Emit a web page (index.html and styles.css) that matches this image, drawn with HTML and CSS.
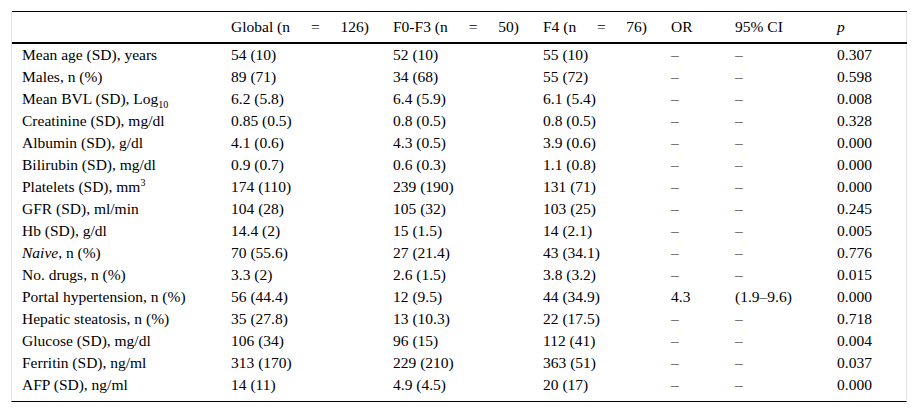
FILE: index.html
```html
<!DOCTYPE html>
<html>

<head>
    <title>Baseline characteristics</title>
    <link rel="stylesheet" href="styles.css">
</head>

<body>
    <div class="box">
        <table class="data">
            <colgroup>
                <col class="c-label">
                <col class="c-global">
                <col class="c-f03">
                <col class="c-f4">
                <col class="c-or">
                <col class="c-ci">
                <col class="c-p">
            </colgroup>
            <thead>
                <tr>
                    <th></th>
                    <th><div class="spread"><span>Global (n</span><span>=</span><span>126)</span></div></th>
                    <th><div class="spread"><span>F0-F3 (n</span><span>=</span><span>50)</span></div></th>
                    <th><div class="spread"><span>F4 (n</span><span>=</span><span>76)</span></div></th>
                    <th>OR</th>
                    <th>95% CI</th>
                    <th><i>p</i></th>
                </tr>
            </thead>
            <tbody>
                <tr><td>Mean age (SD), years</td><td>54 (10)</td><td>52 (10)</td><td>55 (10)</td><td>&ndash;</td><td>&ndash;</td><td>0.307</td></tr>
                <tr><td>Males, n (%)</td><td>89 (71)</td><td>34 (68)</td><td>55 (72)</td><td>&ndash;</td><td>&ndash;</td><td>0.598</td></tr>
                <tr><td>Mean BVL (SD), Log<sub>10</sub></td><td>6.2 (5.8)</td><td>6.4 (5.9)</td><td>6.1 (5.4)</td><td>&ndash;</td><td>&ndash;</td><td>0.008</td></tr>
                <tr><td>Creatinine (SD), mg/dl</td><td>0.85 (0.5)</td><td>0.8 (0.5)</td><td>0.8 (0.5)</td><td>&ndash;</td><td>&ndash;</td><td>0.328</td></tr>
                <tr><td>Albumin (SD), g/dl</td><td>4.1 (0.6)</td><td>4.3 (0.5)</td><td>3.9 (0.6)</td><td>&ndash;</td><td>&ndash;</td><td>0.000</td></tr>
                <tr><td>Bilirubin (SD), mg/dl</td><td>0.9 (0.7)</td><td>0.6 (0.3)</td><td>1.1 (0.8)</td><td>&ndash;</td><td>&ndash;</td><td>0.000</td></tr>
                <tr><td>Platelets (SD), mm<sup>3</sup></td><td>174 (110)</td><td>239 (190)</td><td>131 (71)</td><td>&ndash;</td><td>&ndash;</td><td>0.000</td></tr>
                <tr><td>GFR (SD), ml/min</td><td>104 (28)</td><td>105 (32)</td><td>103 (25)</td><td>&ndash;</td><td>&ndash;</td><td>0.245</td></tr>
                <tr><td>Hb (SD), g/dl</td><td>14.4 (2)</td><td>15 (1.5)</td><td>14 (2.1)</td><td>&ndash;</td><td>&ndash;</td><td>0.005</td></tr>
                <tr><td><i>Naive</i>, n (%)</td><td>70 (55.6)</td><td>27 (21.4)</td><td>43 (34.1)</td><td>&ndash;</td><td>&ndash;</td><td>0.776</td></tr>
                <tr><td>No. drugs, n (%)</td><td>3.3 (2)</td><td>2.6 (1.5)</td><td>3.8 (3.2)</td><td>&ndash;</td><td>&ndash;</td><td>0.015</td></tr>
                <tr><td>Portal hypertension, n (%)</td><td>56 (44.4)</td><td>12 (9.5)</td><td>44 (34.9)</td><td>4.3</td><td>(1.9&ndash;9.6)</td><td>0.000</td></tr>
                <tr><td>Hepatic steatosis, n (%)</td><td>35 (27.8)</td><td>13 (10.3)</td><td>22 (17.5)</td><td>&ndash;</td><td>&ndash;</td><td>0.718</td></tr>
                <tr><td>Glucose (SD), mg/dl</td><td>106 (34)</td><td>96 (15)</td><td>112 (41)</td><td>&ndash;</td><td>&ndash;</td><td>0.004</td></tr>
                <tr><td>Ferritin (SD), ng/ml</td><td>313 (170)</td><td>229 (210)</td><td>363 (51)</td><td>&ndash;</td><td>&ndash;</td><td>0.037</td></tr>
                <tr><td>AFP (SD), ng/ml</td><td>14 (11)</td><td>4.9 (4.5)</td><td>20 (17)</td><td>&ndash;</td><td>&ndash;</td><td>0.000</td></tr>
            </tbody>
        </table>
    </div>
</body>

</html>
```

FILE: styles.css
```css
body {
    margin: 0;
    padding: 11px;
    background: #fff;
    color: #000;
    font-family: "Liberation Serif", "Times New Roman", serif;
    font-size: 15.5px;
}

.box {
    width: 896px;
    box-sizing: border-box;
    border-left: 1px solid #e2e2e2;
    border-right: 1px solid #e2e2e2;
    border-bottom: 1px solid #000;
    padding-bottom: 5px;
}

.data {
    width: 100%;
    border-collapse: collapse;
    table-layout: fixed;
    border-top: 1px solid #000;
    font-size: 15.5px;
}

.c-label { width: 209px; }
.c-global { width: 162px; }
.c-f03 { width: 150px; }
.c-f4 { width: 128px; }
.c-or { width: 64px; }
.c-ci { width: 102px; }
.c-p { width: 80px; }

.data th,
.data td {
    text-align: left;
    padding: 0 0 0 10px;
    white-space: nowrap;
    font-weight: normal;
}

.data thead th {
    height: 30px;
    border-bottom: 2px solid #000;
}

.spread {
    display: flex;
    justify-content: space-between;
    padding-right: 14px;
}

.data tbody td {
    height: 22px;
    line-height: 22px;
}

sub, sup {
    font-size: 10px;
    line-height: 0;
}
```
